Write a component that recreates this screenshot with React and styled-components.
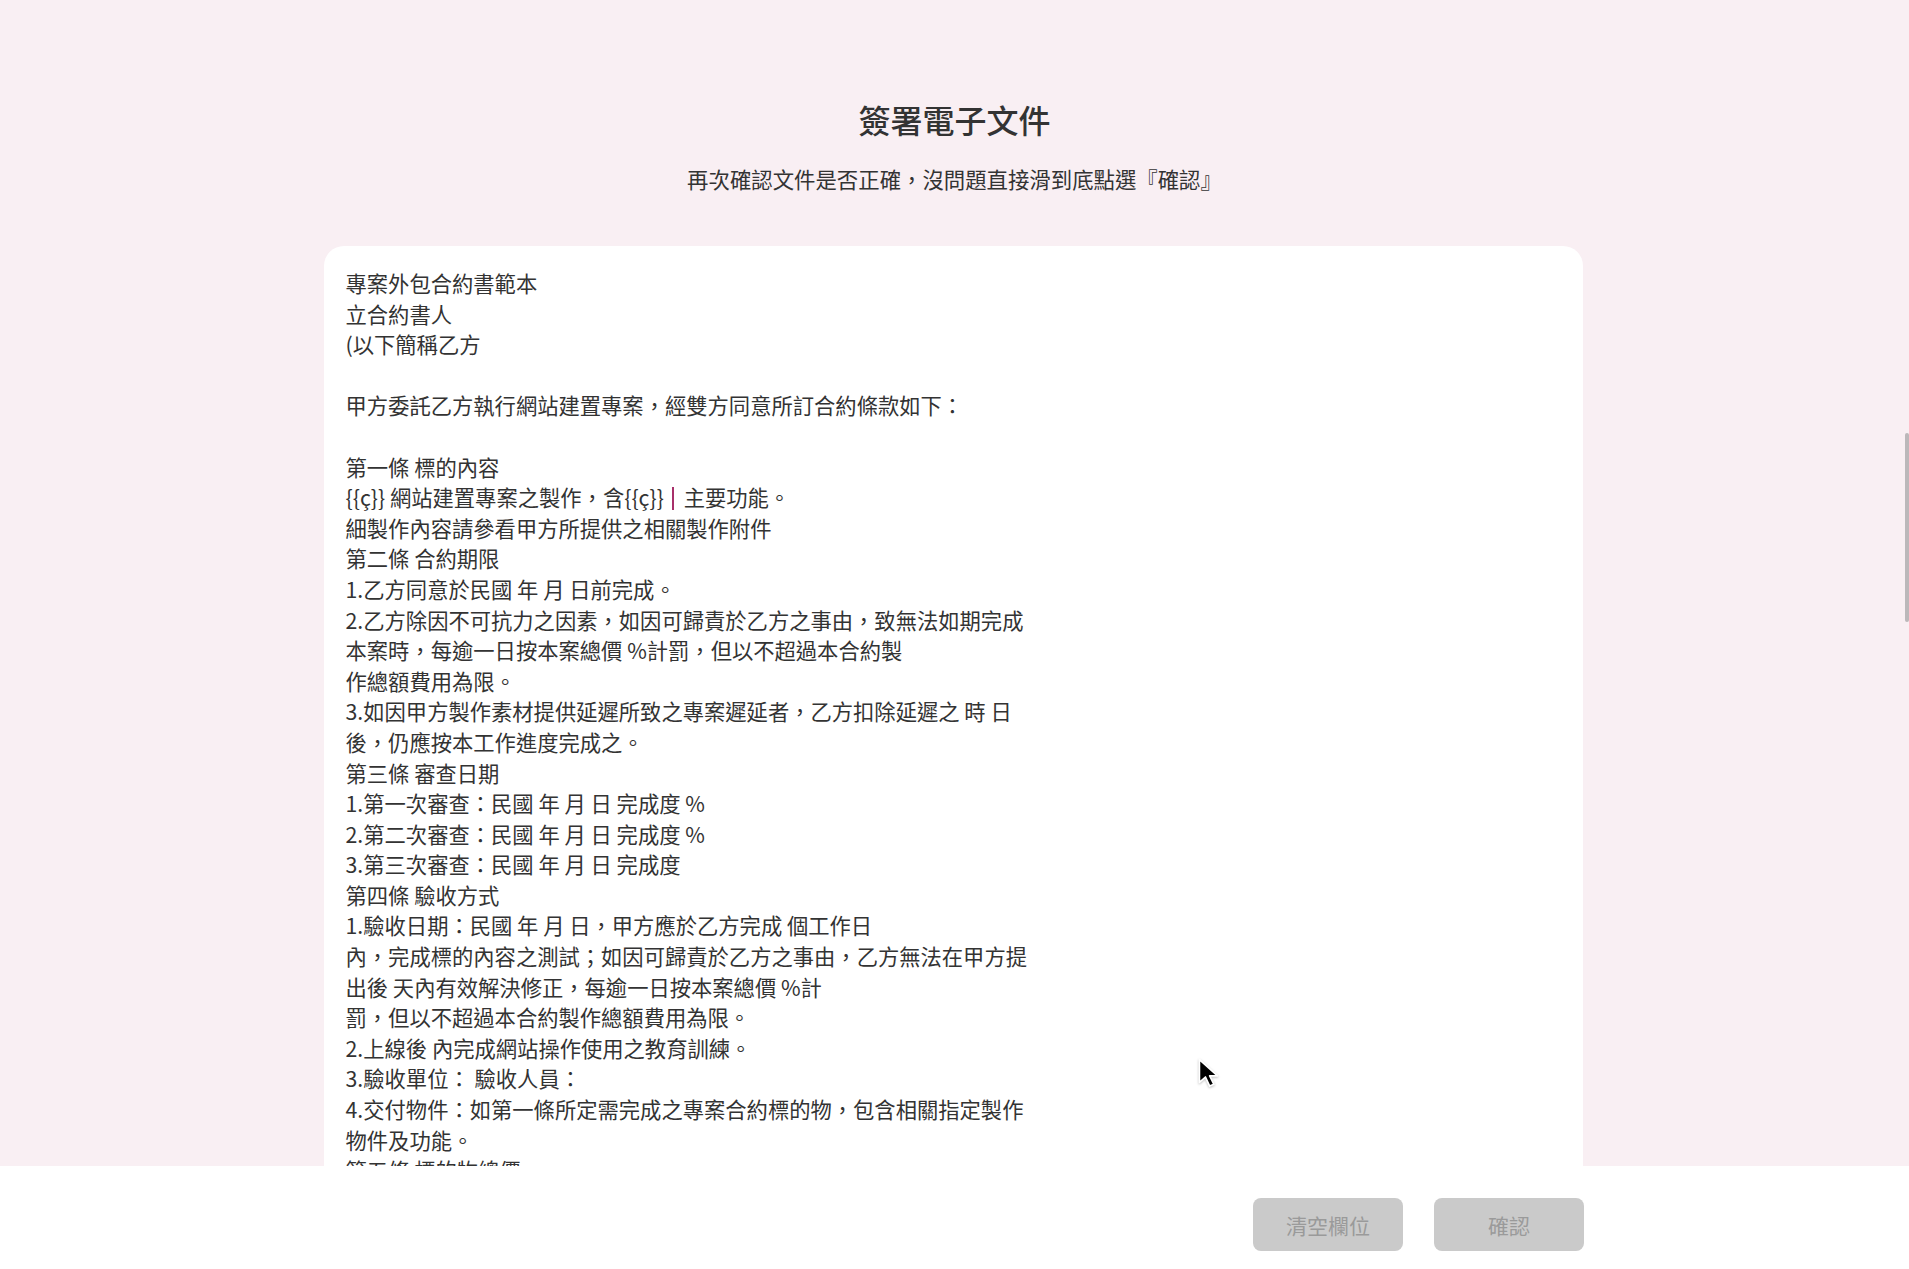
import React from "react";
import styled, { createGlobalStyle } from "styled-components";

const GlobalStyle = createGlobalStyle`
  html, body {
    margin: 0;
    padding: 0;
  }
  body {
    font-family: "Noto Sans CJK TC", "Noto Sans", sans-serif;
    color: #333;
  }
`;

const docBefore = `專案外包合約書範本
立合約書人
(以下簡稱乙方

甲方委託乙方執行網站建置專案，經雙方同意所訂合約條款如下：

第一條 標的內容`;

const docAfter = `細製作內容請參看甲方所提供之相關製作附件
第二條 合約期限
1.乙方同意於民國 年 月 日前完成。
2.乙方除因不可抗力之因素，如因可歸責於乙方之事由，致無法如期完成
本案時，每逾一日按本案總價 %計罰，但以不超過本合約製
作總額費用為限。
3.如因甲方製作素材提供延遲所致之專案遲延者，乙方扣除延遲之 時 日
後，仍應按本工作進度完成之。
第三條 審查日期
1.第一次審查：民國 年 月 日 完成度 %
2.第二次審查：民國 年 月 日 完成度 %
3.第三次審查：民國 年 月 日 完成度
第四條 驗收方式
1.驗收日期：民國 年 月 日，甲方應於乙方完成 個工作日
內，完成標的內容之測試；如因可歸責於乙方之事由，乙方無法在甲方提
出後 天內有效解決修正，每逾一日按本案總價 %計
罰，但以不超過本合約製作總額費用為限。
2.上線後 內完成網站操作使用之教育訓練。
3.驗收單位： 驗收人員：
4.交付物件：如第一條所定需完成之專案合約標的物，包含相關指定製作
物件及功能。
第五條 標的物總價
1.本合約總價為新台幣 元整（含稅）。
2.付款方式：`;

export default function App() {
  return (
    <>
      <GlobalStyle />
      <Page>
        <Header>
          <Title>簽署電子文件</Title>
          <Subtitle>再次確認文件是否正確，沒問題直接滑到底點選『確認』</Subtitle>
        </Header>
        <Viewport>
          <Card>
            <DocText>
              {docBefore}
              {"\n"}
              {"{{ç}} 網站建置專案之製作，含{{ç}} "}
              <Caret />
              {"主要功能。"}
              {"\n"}
              {docAfter}
            </DocText>
          </Card>
        </Viewport>
        <Footer>
          <Button disabled>清空欄位</Button>
          <Button disabled>確認</Button>
        </Footer>
        <ScrollThumb />
        <Pointer width="29" height="32" viewBox="0 0 24 26">
          <path
            d="M2 1 L2 20 L7 15.5 L10.5 23 L14 21.5 L10.5 14.5 L17 14.5 Z"
            fill="#000"
            stroke="#fff"
            strokeWidth="1.4"
            strokeLinejoin="round"
          />
        </Pointer>
      </Page>
    </>
  );
}

const Page = styled.div`
  position: relative;
  height: 100vh;
  display: flex;
  flex-direction: column;
  background: #f9eff3;
  overflow: hidden;
`;

const Header = styled.header`
  display: flex;
  flex-direction: column;
  align-items: center;
  padding-top: 97px;
  padding-bottom: 52px;
`;

const Title = styled.h1`
  margin: 0;
  font-size: 32px;
  line-height: 45px;
  font-weight: 500;
  color: #333;
`;

const Subtitle = styled.p`
  margin: 22px 0 0;
  font-size: 21.4px;
  line-height: 30px;
  color: #333;
`;

const Viewport = styled.main`
  flex: 1;
  min-height: 0;
  overflow: hidden;
`;

const Card = styled.section`
  width: 1259px;
  margin: 0 0 0 calc(50% - 631px);
  box-sizing: border-box;
  background: #fff;
  border-radius: 20px;
  padding: 22px 22px 40px;
`;

const DocText = styled.div`
  max-width: 740px;
  white-space: pre-wrap;
  font-size: 21.3px;
  line-height: 30.6px;
  color: #333;
`;

const Caret = styled.span`
  display: inline-block;
  width: 2px;
  height: 23px;
  margin: 0 10px 0 3px;
  vertical-align: -4px;
  background: #a8306a;
`;

const Footer = styled.footer`
  flex: 0 0 103px;
  box-sizing: border-box;
  background: #fff;
  display: flex;
  justify-content: flex-end;
  align-items: flex-start;
  gap: 31px;
  padding: 32px 325px 0 0;
`;

const Button = styled.button`
  width: 150px;
  height: 53px;
  border: none;
  border-radius: 8px;
  background: #cacaca;
  color: #9a9a9a;
  font-family: "Noto Sans CJK TC", "Noto Sans", sans-serif;
  font-size: 21px;
  cursor: not-allowed;
`;

const ScrollThumb = styled.div`
  position: absolute;
  top: 433px;
  right: 0;
  width: 4px;
  height: 189px;
  border-radius: 2px;
  background: #bcb8ba;
`;

const Pointer = styled.svg`
  position: absolute;
  left: 1197px;
  top: 1058px;
  filter: drop-shadow(0 1px 1px rgba(0, 0, 0, 0.25));
`;
